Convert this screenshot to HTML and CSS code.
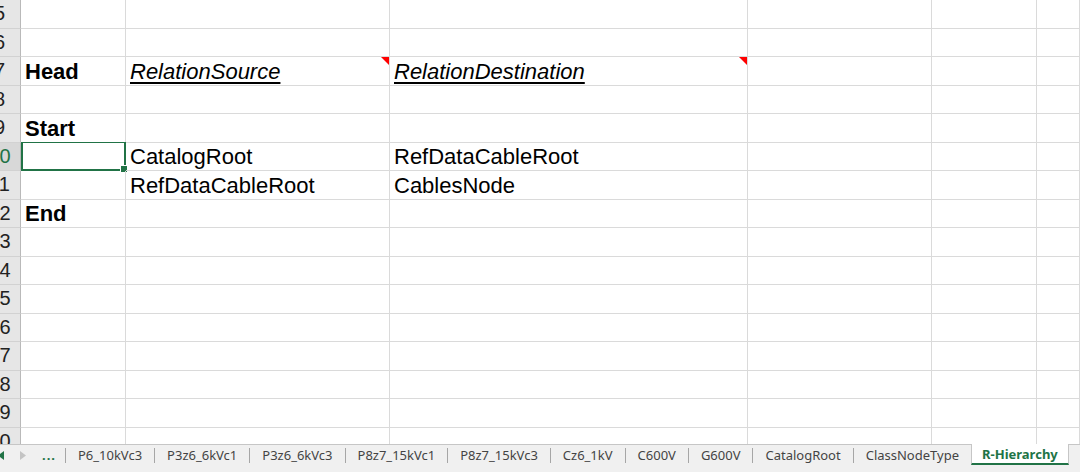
FILE: index.html
```html
<!DOCTYPE html>
<html lang="en">
<head>
    <meta charset="UTF-8">
    <title>R-Hierarchy</title>
    <link rel="stylesheet" href="styles.css">
</head>
<body>
    <div class="sheet">
        <div class="row"><div class="rh">5</div><div class="c"></div><div class="c"></div><div class="c"></div><div class="c"></div><div class="c"></div><div class="c"></div></div>
        <div class="row"><div class="rh">6</div><div class="c"></div><div class="c"></div><div class="c"></div><div class="c"></div><div class="c"></div><div class="c"></div></div>
        <div class="row"><div class="rh">7</div><div class="c b">Head</div><div class="c iu note">RelationSource</div><div class="c iu note">RelationDestination</div><div class="c"></div><div class="c"></div><div class="c"></div></div>
        <div class="row"><div class="rh">8</div><div class="c"></div><div class="c"></div><div class="c"></div><div class="c"></div><div class="c"></div><div class="c"></div></div>
        <div class="row"><div class="rh">9</div><div class="c b">Start</div><div class="c"></div><div class="c"></div><div class="c"></div><div class="c"></div><div class="c"></div></div>
        <div class="row"><div class="rh active">10</div><div class="c sel"></div><div class="c">CatalogRoot</div><div class="c">RefDataCableRoot</div><div class="c"></div><div class="c"></div><div class="c"></div></div>
        <div class="row"><div class="rh">11</div><div class="c"></div><div class="c">RefDataCableRoot</div><div class="c">CablesNode</div><div class="c"></div><div class="c"></div><div class="c"></div></div>
        <div class="row"><div class="rh">12</div><div class="c b">End</div><div class="c"></div><div class="c"></div><div class="c"></div><div class="c"></div><div class="c"></div></div>
        <div class="row"><div class="rh">13</div><div class="c"></div><div class="c"></div><div class="c"></div><div class="c"></div><div class="c"></div><div class="c"></div></div>
        <div class="row"><div class="rh">14</div><div class="c"></div><div class="c"></div><div class="c"></div><div class="c"></div><div class="c"></div><div class="c"></div></div>
        <div class="row"><div class="rh">15</div><div class="c"></div><div class="c"></div><div class="c"></div><div class="c"></div><div class="c"></div><div class="c"></div></div>
        <div class="row"><div class="rh">16</div><div class="c"></div><div class="c"></div><div class="c"></div><div class="c"></div><div class="c"></div><div class="c"></div></div>
        <div class="row"><div class="rh">17</div><div class="c"></div><div class="c"></div><div class="c"></div><div class="c"></div><div class="c"></div><div class="c"></div></div>
        <div class="row"><div class="rh">18</div><div class="c"></div><div class="c"></div><div class="c"></div><div class="c"></div><div class="c"></div><div class="c"></div></div>
        <div class="row"><div class="rh">19</div><div class="c"></div><div class="c"></div><div class="c"></div><div class="c"></div><div class="c"></div><div class="c"></div></div>
        <div class="row"><div class="rh">20</div><div class="c"></div><div class="c"></div><div class="c"></div><div class="c"></div><div class="c"></div><div class="c"></div></div>
    </div>

    <div class="tabbar">
        <div class="nav">
            <svg class="arrow" width="6" height="9" viewBox="0 0 6 9"><path d="M6 0 L0 4.5 L6 9 Z" fill="#217346"/></svg>
            <svg class="arrow" width="6" height="9" viewBox="0 0 6 9"><path d="M0 0 L6 4.5 L0 9 Z" fill="#c4c4c4"/></svg>
        </div>
        <div class="tab more">...</div>
        <span class="sep"></span>
        <div class="tab">P6_10kVc3</div>
        <span class="sep"></span>
        <div class="tab">P3z6_6kVc1</div>
        <span class="sep"></span>
        <div class="tab">P3z6_6kVc3</div>
        <span class="sep"></span>
        <div class="tab">P8z7_15kVc1</div>
        <span class="sep"></span>
        <div class="tab">P8z7_15kVc3</div>
        <span class="sep"></span>
        <div class="tab">Cz6_1kV</div>
        <span class="sep"></span>
        <div class="tab">C600V</div>
        <span class="sep"></span>
        <div class="tab">G600V</div>
        <span class="sep"></span>
        <div class="tab">CatalogRoot</div>
        <span class="sep"></span>
        <div class="tab">ClassNodeType</div>
        <div class="tab current">R-Hierarchy</div>
    </div>
</body>
</html>
```

FILE: styles.css
```css
* {
    box-sizing: border-box;
}
body {
    margin: 0;
    height: 472px;
    overflow: hidden;
    background: #fff;
    font-family: 'Liberation Sans', Arial, sans-serif;
}

/* grid of cells */
.sheet {
    height: 444px;
    overflow: hidden;
}
.row {
    display: grid;
    grid-template-columns: 41px 105px 264px 358px 184px 105px 1fr;
    height: 28.5px;
    margin-left: -20px;
}
.rh {
    background: #e6e6e6;
    border-right: 1px solid #b9b9b9;
    border-bottom: 1px solid #d2d2d2;
    color: #222;
    font-size: 20px;
    display: flex;
    align-items: center;
    justify-content: center;
    padding-right: 1px;
}
.rh.active {
    background: #d8d8d8;
    color: #217346;
}
.c {
    position: relative;
    border-right: 1px solid #dadada;
    border-bottom: 1px solid #dadada;
    font-size: 22px;
    line-height: 25px;
    color: #000;
    padding: 0 0 1px 4px;
    display: flex;
    align-items: flex-end;
    white-space: nowrap;
}
.c.b {
    font-weight: bold;
}
.c.iu {
    font-style: italic;
    text-decoration: underline;
    text-decoration-thickness: 2px;
    text-underline-offset: 3px;
}

/* red comment marker in the corner */
.c.note::after {
    content: "";
    position: absolute;
    top: 0;
    right: 0;
    border-top: 8px solid #ff0000;
    border-left: 8px solid transparent;
}

/* active cell */
.c.sel {
    border: 2px solid #217346;
    border-top-width: 1px;
    margin-top: -1px;
    height: calc(100% + 1px);
}
.c.sel::after {
    content: "";
    position: absolute;
    right: -4px;
    bottom: -4px;
    width: 6px;
    height: 6px;
    background: #217346;
    border: 1px solid #fff;
}

/* sheet tabs */
.tabbar {
    height: 28px;
    border-top: 1px solid #c6c6c6;
    background: #f0f0f0;
    display: flex;
    align-items: stretch;
    padding-bottom: 7px;
    font-family: 'Noto Sans', 'Open Sans', sans-serif;
    font-size: 13px;
    color: #444;
}
.nav {
    width: 40px;
    display: flex;
    align-items: center;
    gap: 16px;
    margin-left: -2px;
}
.tab {
    display: flex;
    align-items: center;
    padding: 0 12px;
    white-space: nowrap;
}
.tab.more {
    color: #217346;
    font-weight: bold;
    padding: 0 9px 0 4px;
    letter-spacing: 1px;
}
.sep {
    width: 1px;
    height: 15px;
    align-self: center;
    background: #a6a6a6;
}
.tab.current {
    background: #fff;
    border-left: 1px solid #c6c6c6;
    border-right: 1px solid #c6c6c6;
    border-bottom: 2px solid #217346;
    margin-top: -1px;
    padding: 0 10px;
    color: #217346;
    font-weight: bold;
}
```
